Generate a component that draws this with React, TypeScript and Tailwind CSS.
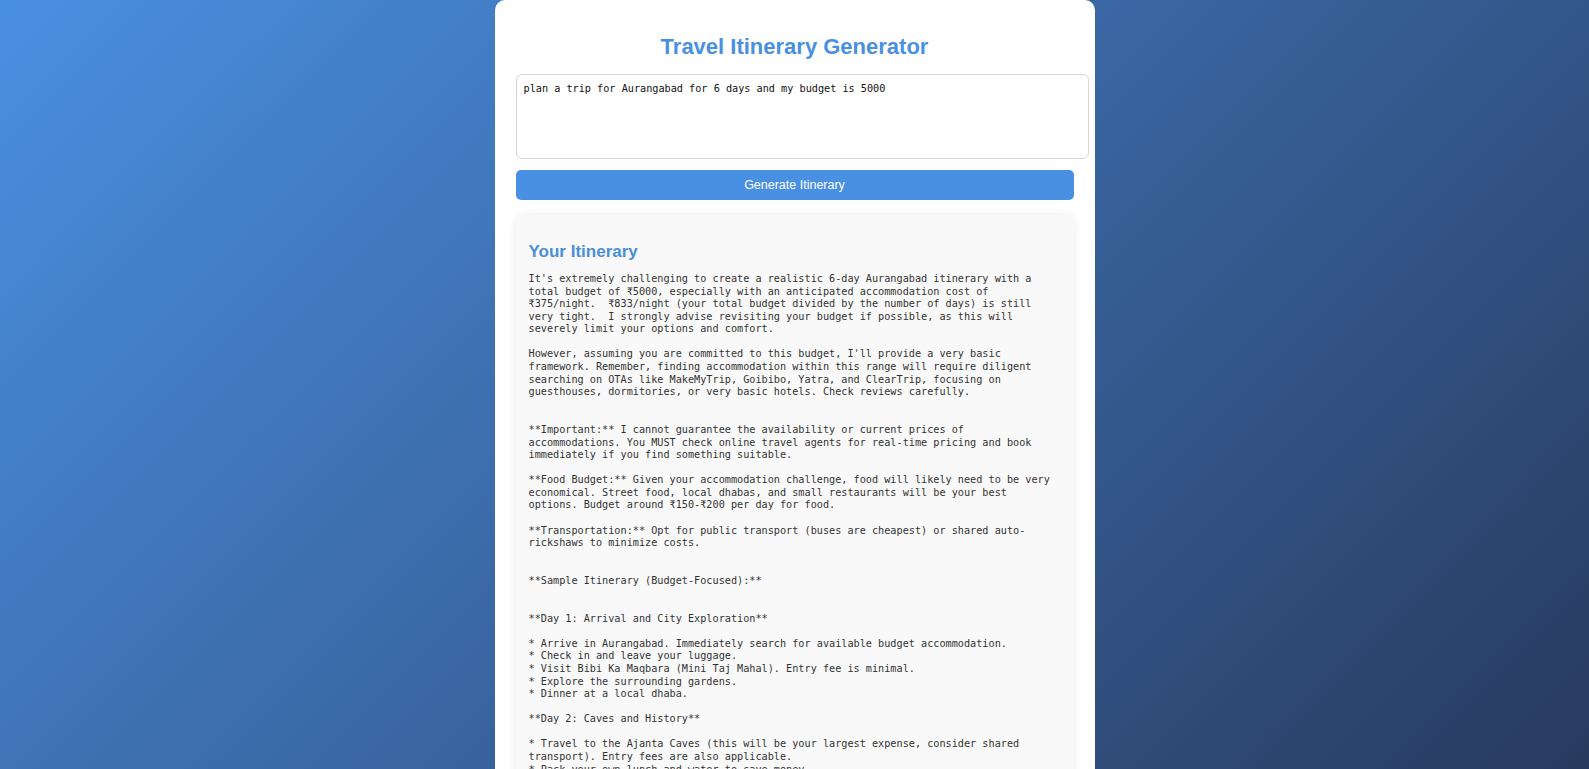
import React from 'react';

const ITINERARY = `It's extremely challenging to create a realistic 6-day Aurangabad itinerary with a
total budget of ₹5000, especially with an anticipated accommodation cost of
₹375/night.  ₹833/night (your total budget divided by the number of days) is still
very tight.  I strongly advise revisiting your budget if possible, as this will
severely limit your options and comfort.

However, assuming you are committed to this budget, I'll provide a very basic
framework. Remember, finding accommodation within this range will require diligent
searching on OTAs like MakeMyTrip, Goibibo, Yatra, and ClearTrip, focusing on
guesthouses, dormitories, or very basic hotels. Check reviews carefully.


**Important:** I cannot guarantee the availability or current prices of
accommodations. You MUST check online travel agents for real-time pricing and book
immediately if you find something suitable.

**Food Budget:** Given your accommodation challenge, food will likely need to be very
economical. Street food, local dhabas, and small restaurants will be your best
options. Budget around ₹150-₹200 per day for food.

**Transportation:** Opt for public transport (buses are cheapest) or shared auto-
rickshaws to minimize costs.


**Sample Itinerary (Budget-Focused):**


**Day 1: Arrival and City Exploration**

* Arrive in Aurangabad. Immediately search for available budget accommodation.
* Check in and leave your luggage.
* Visit Bibi Ka Maqbara (Mini Taj Mahal). Entry fee is minimal.
* Explore the surrounding gardens.
* Dinner at a local dhaba.

**Day 2: Caves and History**

* Travel to the Ajanta Caves (this will be your largest expense, consider shared
transport). Entry fees are also applicable.
* Pack your own lunch and water to save money.
* Return to Aurangabad in the evening.

**Day 3: Ellora Caves**

* Take a local bus to the Ellora Caves.
* Spend the day exploring the caves.`;

export default function App() {
  return (
    <div className="h-screen overflow-hidden flex justify-center bg-[linear-gradient(135deg,#4a90e2_0%,#283a5e_100%)] font-['Liberation_Sans',Arial,sans-serif]">
      <div className="w-[600px] shrink-0 self-start bg-white rounded-[10px] px-[21px] pt-[34px] pb-10">
        <h1 className="h-[26px] leading-[26px] text-center text-[22px] font-bold text-[#4a90e2]">
          Travel Itinerary Generator
        </h1>

        <textarea
          defaultValue="plan a trip for Aurangabad for 6 days and my budget is 5000"
          className="mt-[14px] block w-[573px] h-[85px] resize-none rounded-[6px] border border-[#d6d6d6] bg-white p-[7px] text-[10.2px] leading-[13px] text-[#111] outline-none font-['DejaVu_Sans_Mono',monospace]"
        />

        <button className="mt-[11px] block w-full h-[30px] rounded-[5px] bg-[#4a90e2] text-[12.5px] text-white">
          Generate Itinerary
        </button>

        {/* Result */}
        <div className="mt-[15px] rounded-[8px] bg-[#f9f9f9] px-[13px] pt-[27px] pb-6 shadow-[0_0_10px_rgba(0,0,0,0.08)]">
          <h2 className="h-[20px] leading-[20px] text-[17px] font-bold text-[#4a8fd8]">Your Itinerary</h2>
          <pre className="mt-[11px] whitespace-pre text-[10.2px] leading-[12.58px] text-[#333] font-['DejaVu_Sans_Mono',monospace]">
            {ITINERARY}
          </pre>
        </div>
      </div>
    </div>
  );
}
